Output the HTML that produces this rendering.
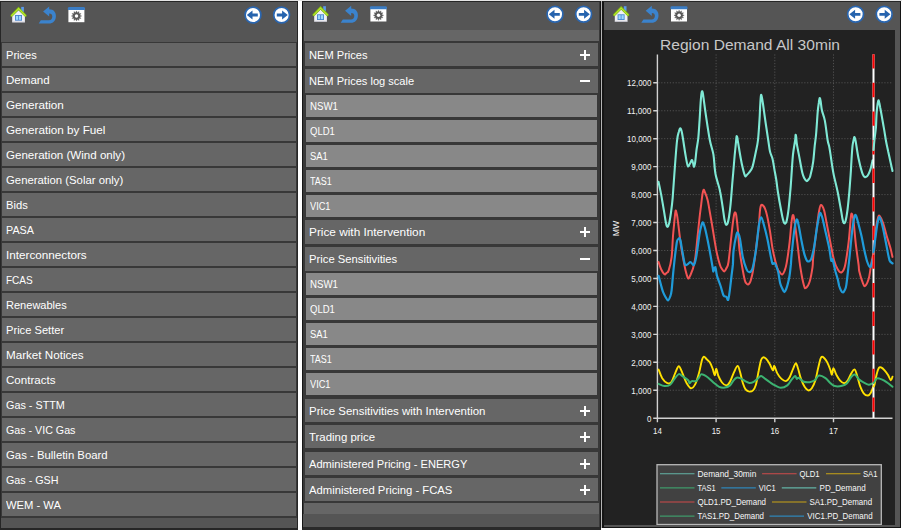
<!DOCTYPE html><html lang="en"><head><meta charset="utf-8"><title>NEM Viewer</title><style>

html,body{margin:0;padding:0}
body{width:902px;height:530px;position:relative;overflow:hidden;background:#fff;font-family:"Liberation Sans", sans-serif;font-size:11px;color:#fff}
.abs{position:absolute}
.panel{position:absolute;background:#555;box-sizing:border-box}
.tb{position:absolute}
.list{position:absolute;background:#383838}
.it{position:absolute;background:#666;height:23px;line-height:24px;white-space:nowrap;overflow:hidden;box-sizing:border-box;padding-left:4px}
.it span{display:inline-block;transform-origin:0 50%}
.sub{background:#888;font-size:10px;padding-left:3.5px}
.pm{position:absolute;right:8px;top:50%;width:10px;height:10px;margin-top:-5px}
.pm i{position:absolute;background:#fff;display:block}
.pm i.h{left:0;top:4px;width:10px;height:2px}
.pm i.v{left:4px;top:0;width:2px;height:10px}

</style></head><body>
<div class="abs" style="left:0;top:0;width:902px;height:1px;background:#e4e4e4"></div>
<div class="panel" style="left:0;top:1px;width:298px;height:529px;border:1px solid #262626;border-bottom-width:2px"></div>
<div class="list" style="left:1px;top:42px;width:296px;height:476px"></div>
<div class="it" style="left:2px;top:43px;width:294px"><span style="transform:scaleX(1.007)">Prices</span></div>
<div class="it" style="left:2px;top:68px;width:294px"><span style="transform:scaleX(1.050)">Demand</span></div>
<div class="it" style="left:2px;top:93px;width:294px"><span style="transform:scaleX(1.063)">Generation</span></div>
<div class="it" style="left:2px;top:118px;width:294px"><span style="transform:scaleX(1.063)">Generation by Fuel</span></div>
<div class="it" style="left:2px;top:143px;width:294px"><span style="transform:scaleX(1.052)">Generation (Wind only)</span></div>
<div class="it" style="left:2px;top:168px;width:294px"><span style="transform:scaleX(1.031)">Generation (Solar only)</span></div>
<div class="it" style="left:2px;top:193px;width:294px"><span style="transform:scaleX(1.015)">Bids</span></div>
<div class="it" style="left:2px;top:218px;width:294px"><span style="transform:scaleX(0.978)">PASA</span></div>
<div class="it" style="left:2px;top:243px;width:294px"><span style="transform:scaleX(1.064)">Interconnectors</span></div>
<div class="it" style="left:2px;top:268px;width:294px"><span style="transform:scaleX(0.911)">FCAS</span></div>
<div class="it" style="left:2px;top:293px;width:294px"><span style="transform:scaleX(1.003)">Renewables</span></div>
<div class="it" style="left:2px;top:318px;width:294px"><span style="transform:scaleX(1.012)">Price Setter</span></div>
<div class="it" style="left:2px;top:343px;width:294px"><span style="transform:scaleX(1.058)">Market Notices</span></div>
<div class="it" style="left:2px;top:368px;width:294px"><span style="transform:scaleX(1.051)">Contracts</span></div>
<div class="it" style="left:2px;top:393px;width:294px"><span style="transform:scaleX(0.983)">Gas - STTM</span></div>
<div class="it" style="left:2px;top:418px;width:294px"><span style="transform:scaleX(0.971)">Gas - VIC Gas</span></div>
<div class="it" style="left:2px;top:443px;width:294px"><span style="transform:scaleX(1.033)">Gas - Bulletin Board</span></div>
<div class="it" style="left:2px;top:468px;width:294px"><span style="transform:scaleX(0.977)">Gas - GSH</span></div>
<div class="it" style="left:2px;top:493px;width:294px"><span style="transform:scaleX(1.019)">WEM - WA</span></div>
<svg class="tb" style="left:0px;top:0px" width="297" height="28" viewBox="0.00 0.00 297 28"><g><rect x="21.2" y="6.9" width="2.7" height="5" fill="#5b9bea"/><path d="M12.2,16.2 L18.55,10.2 L24.9,16.2 L24.9,22.2 L12.2,22.2 Z" fill="#f0f0f6"/><path d="M12.2,21.5 H24.9 V22.4 H12.2 Z" fill="#cfcfd8"/><rect x="15" y="15" width="7" height="5.7" fill="#4a86d0"/><rect x="15.9" y="15.9" width="2.2" height="3.9" fill="#9dd8ff"/><rect x="18.9" y="15.9" width="2.2" height="3.9" fill="#9dd8ff"/><path d="M11.7,15.5 L18.55,8.5 L25.4,15.5" fill="none" stroke="#86bf10" stroke-width="2.5" stroke-linecap="round" stroke-linejoin="miter"/><path d="M11.8,15.5 L18.55,8.7 L25.3,15.5" fill="none" stroke="#b4e530" stroke-width="1.2" stroke-linecap="round" stroke-linejoin="miter"/></g><path d="M43.1,11.4 L49.2,6.4 L49.2,9.3 C53.6,9.3 55.9,12.2 55.9,15.9 C55.9,20.6 53,23.5 49,23.5 L38.7,23.5 L40.8,20.3 L49,20.3 C51,20.3 52.3,18.8 52.3,16.5 C52.3,14.6 51.3,13.6 49.2,13.6 L49.2,16.6 Z" fill="#3b83cd"/><g><rect x="68.4" y="8" width="16" height="14.2" fill="#ffffff"/><path d="M67.9,9.9 V8.2 Q67.9,6.9 69.2,6.9 H83.6 Q84.9,6.9 84.9,8.2 V9.9 Z" fill="#3a7cc4"/><polygon points="76.50,10.90 77.35,12.81 79.05,11.58 78.83,13.67 80.92,13.45 79.69,15.15 81.60,16.00 79.69,16.85 80.92,18.55 78.83,18.33 79.05,20.42 77.35,19.19 76.50,21.10 75.65,19.19 73.95,20.42 74.17,18.33 72.08,18.55 73.31,16.85 71.40,16.00 73.31,15.15 72.08,13.45 74.17,13.67 73.95,11.58 75.65,12.81" fill="#585858" stroke="#585858" stroke-width="0.4"/><circle cx="76.5" cy="16.0" r="1.75" fill="#fff"/></g><circle cx="253.0" cy="15" r="7.9" fill="#fff" stroke="#2a66b0" stroke-width="1.7"/><path d="M246.8,15 L252.5,10.5 L252.5,13.6 L257.8,13.6 L257.8,16.4 L252.5,16.4 L252.5,19.5 Z" fill="#2563ae"/><circle cx="281.6" cy="15" r="7.9" fill="#fff" stroke="#2a66b0" stroke-width="1.7"/><path d="M287.8,15 L282.1,10.5 L282.1,13.6 L276.8,13.6 L276.8,16.4 L282.1,16.4 L282.1,19.5 Z" fill="#2563ae"/></svg>
<div class="panel" style="left:302px;top:1px;width:299px;height:529px;border:1px solid #161616;border-top-color:#262626;border-bottom:3px solid #2a2a2a"></div><div class="abs" style="left:599px;top:2px;width:1px;height:525px;background:#3a3a3a"></div>
<div class="list" style="left:303px;top:30px;width:297px;height:484px"></div>
<div class="it" style="left:304px;top:30px;width:295px;height:11px"></div>
<div class="it" style="left:305px;top:43px;width:293px;height:23px;line-height:24px"><span style="transform:scaleX(1.009)">NEM Prices</span><b class="pm"><i class="h"></i><i class="v"></i></b></div>
<div class="it" style="left:305px;top:69px;width:293px;height:24px;line-height:25px"><span style="transform:scaleX(1.005)">NEM Prices log scale</span><b class="pm"><i class="h"></i></b></div>
<div class="it sub" style="left:306px;top:95px;width:291px;height:22px;line-height:23px"><span style="transform:scaleX(0.967)">NSW1</span></div>
<div class="it sub" style="left:306px;top:120px;width:291px;height:22px;line-height:23px"><span style="transform:scaleX(0.950)">QLD1</span></div>
<div class="it sub" style="left:306px;top:145px;width:291px;height:22px;line-height:23px"><span style="transform:scaleX(0.940)">SA1</span></div>
<div class="it sub" style="left:306px;top:170px;width:291px;height:22px;line-height:23px"><span style="transform:scaleX(0.900)">TAS1</span></div>
<div class="it sub" style="left:306px;top:195px;width:291px;height:22px;line-height:23px"><span style="transform:scaleX(0.920)">VIC1</span></div>
<div class="it" style="left:305px;top:220px;width:293px;height:24px;line-height:25px"><span style="transform:scaleX(1.074)">Price with Intervention</span><b class="pm"><i class="h"></i><i class="v"></i></b></div>
<div class="it" style="left:305px;top:247px;width:293px;height:24px;line-height:25px"><span style="transform:scaleX(1.023)">Price Sensitivities</span><b class="pm"><i class="h"></i></b></div>
<div class="it sub" style="left:306px;top:273px;width:291px;height:22px;line-height:23px"><span style="transform:scaleX(0.967)">NSW1</span></div>
<div class="it sub" style="left:306px;top:298px;width:291px;height:22px;line-height:23px"><span style="transform:scaleX(0.950)">QLD1</span></div>
<div class="it sub" style="left:306px;top:323px;width:291px;height:22px;line-height:23px"><span style="transform:scaleX(0.940)">SA1</span></div>
<div class="it sub" style="left:306px;top:348px;width:291px;height:22px;line-height:23px"><span style="transform:scaleX(0.900)">TAS1</span></div>
<div class="it sub" style="left:306px;top:373px;width:291px;height:22px;line-height:23px"><span style="transform:scaleX(0.920)">VIC1</span></div>
<div class="it" style="left:305px;top:399px;width:293px;height:23px;line-height:24px"><span style="transform:scaleX(1.042)">Price Sensitivities with Intervention</span><b class="pm"><i class="h"></i><i class="v"></i></b></div>
<div class="it" style="left:305px;top:425px;width:293px;height:23px;line-height:24px"><span style="transform:scaleX(1.037)">Trading price</span><b class="pm"><i class="h"></i><i class="v"></i></b></div>
<div class="it" style="left:305px;top:452px;width:293px;height:23px;line-height:24px"><span style="transform:scaleX(1.008)">Administered Pricing - ENERGY</span><b class="pm"><i class="h"></i><i class="v"></i></b></div>
<div class="it" style="left:305px;top:478px;width:293px;height:23px;line-height:24px"><span style="transform:scaleX(1.024)">Administered Pricing - FCAS</span><b class="pm"><i class="h"></i><i class="v"></i></b></div>
<div class="it" style="left:304px;top:503px;width:295px;height:11px"></div>
<svg class="tb" style="left:302px;top:0px" width="297" height="28" viewBox="0.00 0.70 297 28"><g><rect x="21.2" y="6.9" width="2.7" height="5" fill="#5b9bea"/><path d="M12.2,16.2 L18.55,10.2 L24.9,16.2 L24.9,22.2 L12.2,22.2 Z" fill="#f0f0f6"/><path d="M12.2,21.5 H24.9 V22.4 H12.2 Z" fill="#cfcfd8"/><rect x="15" y="15" width="7" height="5.7" fill="#4a86d0"/><rect x="15.9" y="15.9" width="2.2" height="3.9" fill="#9dd8ff"/><rect x="18.9" y="15.9" width="2.2" height="3.9" fill="#9dd8ff"/><path d="M11.7,15.5 L18.55,8.5 L25.4,15.5" fill="none" stroke="#86bf10" stroke-width="2.5" stroke-linecap="round" stroke-linejoin="miter"/><path d="M11.8,15.5 L18.55,8.7 L25.3,15.5" fill="none" stroke="#b4e530" stroke-width="1.2" stroke-linecap="round" stroke-linejoin="miter"/></g><path d="M43.1,11.4 L49.2,6.4 L49.2,9.3 C53.6,9.3 55.9,12.2 55.9,15.9 C55.9,20.6 53,23.5 49,23.5 L38.7,23.5 L40.8,20.3 L49,20.3 C51,20.3 52.3,18.8 52.3,16.5 C52.3,14.6 51.3,13.6 49.2,13.6 L49.2,16.6 Z" fill="#3b83cd"/><g><rect x="68.4" y="8" width="16" height="14.2" fill="#ffffff"/><path d="M67.9,9.9 V8.2 Q67.9,6.9 69.2,6.9 H83.6 Q84.9,6.9 84.9,8.2 V9.9 Z" fill="#3a7cc4"/><polygon points="76.50,10.90 77.35,12.81 79.05,11.58 78.83,13.67 80.92,13.45 79.69,15.15 81.60,16.00 79.69,16.85 80.92,18.55 78.83,18.33 79.05,20.42 77.35,19.19 76.50,21.10 75.65,19.19 73.95,20.42 74.17,18.33 72.08,18.55 73.31,16.85 71.40,16.00 73.31,15.15 72.08,13.45 74.17,13.67 73.95,11.58 75.65,12.81" fill="#585858" stroke="#585858" stroke-width="0.4"/><circle cx="76.5" cy="16.0" r="1.75" fill="#fff"/></g><circle cx="253.0" cy="15" r="7.9" fill="#fff" stroke="#2a66b0" stroke-width="1.7"/><path d="M246.8,15 L252.5,10.5 L252.5,13.6 L257.8,13.6 L257.8,16.4 L252.5,16.4 L252.5,19.5 Z" fill="#2563ae"/><circle cx="281.6" cy="15" r="7.9" fill="#fff" stroke="#2a66b0" stroke-width="1.7"/><path d="M287.8,15 L282.1,10.5 L282.1,13.6 L276.8,13.6 L276.8,16.4 L282.1,16.4 L282.1,19.5 Z" fill="#2563ae"/></svg>
<div class="abs" style="left:601px;top:1px;width:1px;height:529px;background:#b4b4b4"></div>
<div class="panel" style="left:602px;top:1px;width:299px;height:527px;border:1px solid #141414;border-left-width:2px;border-top-color:#262626"></div>
<svg class="tb" style="left:602px;top:0px" width="297" height="28" viewBox="-0.60 0.70 297 28"><g><rect x="21.2" y="6.9" width="2.7" height="5" fill="#5b9bea"/><path d="M12.2,16.2 L18.55,10.2 L24.9,16.2 L24.9,22.2 L12.2,22.2 Z" fill="#f0f0f6"/><path d="M12.2,21.5 H24.9 V22.4 H12.2 Z" fill="#cfcfd8"/><rect x="15" y="15" width="7" height="5.7" fill="#4a86d0"/><rect x="15.9" y="15.9" width="2.2" height="3.9" fill="#9dd8ff"/><rect x="18.9" y="15.9" width="2.2" height="3.9" fill="#9dd8ff"/><path d="M11.7,15.5 L18.55,8.5 L25.4,15.5" fill="none" stroke="#86bf10" stroke-width="2.5" stroke-linecap="round" stroke-linejoin="miter"/><path d="M11.8,15.5 L18.55,8.7 L25.3,15.5" fill="none" stroke="#b4e530" stroke-width="1.2" stroke-linecap="round" stroke-linejoin="miter"/></g><path d="M43.1,11.4 L49.2,6.4 L49.2,9.3 C53.6,9.3 55.9,12.2 55.9,15.9 C55.9,20.6 53,23.5 49,23.5 L38.7,23.5 L40.8,20.3 L49,20.3 C51,20.3 52.3,18.8 52.3,16.5 C52.3,14.6 51.3,13.6 49.2,13.6 L49.2,16.6 Z" fill="#3b83cd"/><g><rect x="68.4" y="8" width="16" height="14.2" fill="#ffffff"/><path d="M67.9,9.9 V8.2 Q67.9,6.9 69.2,6.9 H83.6 Q84.9,6.9 84.9,8.2 V9.9 Z" fill="#3a7cc4"/><polygon points="76.50,10.90 77.35,12.81 79.05,11.58 78.83,13.67 80.92,13.45 79.69,15.15 81.60,16.00 79.69,16.85 80.92,18.55 78.83,18.33 79.05,20.42 77.35,19.19 76.50,21.10 75.65,19.19 73.95,20.42 74.17,18.33 72.08,18.55 73.31,16.85 71.40,16.00 73.31,15.15 72.08,13.45 74.17,13.67 73.95,11.58 75.65,12.81" fill="#585858" stroke="#585858" stroke-width="0.4"/><circle cx="76.5" cy="16.0" r="1.75" fill="#fff"/></g><circle cx="253.0" cy="15" r="7.9" fill="#fff" stroke="#2a66b0" stroke-width="1.7"/><path d="M246.8,15 L252.5,10.5 L252.5,13.6 L257.8,13.6 L257.8,16.4 L252.5,16.4 L252.5,19.5 Z" fill="#2563ae"/><circle cx="281.6" cy="15" r="7.9" fill="#fff" stroke="#2a66b0" stroke-width="1.7"/><path d="M287.8,15 L282.1,10.5 L282.1,13.6 L276.8,13.6 L276.8,16.4 L282.1,16.4 L282.1,19.5 Z" fill="#2563ae"/></svg>
<svg class="abs" style="left:604px;top:30px" width="291" height="495" viewBox="604 30 291 495" font-family='Liberation Sans, sans-serif'><rect x="604" y="30" width="291" height="495" fill="#222"/><text x="660" y="50.1" font-size="15" fill="#c8c8c8" textLength="180" lengthAdjust="spacingAndGlyphs">Region Demand All 30min</text><path d="M658.4,390.25 H892.5 M658.4,362.30 H892.5 M658.4,334.35 H892.5 M658.4,306.40 H892.5 M658.4,278.45 H892.5 M658.4,250.50 H892.5 M658.4,222.55 H892.5 M658.4,194.60 H892.5 M658.4,166.65 H892.5 M658.4,138.70 H892.5 M658.4,110.75 H892.5 M658.4,82.80 H892.5 M716.10,54.4 V418.2 M774.80,54.4 V418.2 M833.50,54.4 V418.2" stroke="#565656" stroke-width="0.9" stroke-dasharray="1.2 1.66" fill="none"/><path d="M657.40,54.4 V418.90 M656.70,418.20 H892.5 M653.2,418.20 H657.4 M653.2,390.25 H657.4 M653.2,362.30 H657.4 M653.2,334.35 H657.4 M653.2,306.40 H657.4 M653.2,278.45 H657.4 M653.2,250.50 H657.4 M653.2,222.55 H657.4 M653.2,194.60 H657.4 M653.2,166.65 H657.4 M653.2,138.70 H657.4 M653.2,110.75 H657.4 M653.2,82.80 H657.4 M657.40,418.2 V422.2 M716.10,418.2 V422.2 M774.80,418.2 V422.2 M833.50,418.2 V422.2" stroke="#d2d2d2" stroke-width="1.4" fill="none"/><text x="651.4" y="421.5" font-size="9" fill="#f2f2f2" text-anchor="end" textLength="4.4" lengthAdjust="spacingAndGlyphs">0</text><text x="651.4" y="393.6" font-size="9" fill="#f2f2f2" text-anchor="end" textLength="20.1" lengthAdjust="spacingAndGlyphs">1,000</text><text x="651.4" y="365.6" font-size="9" fill="#f2f2f2" text-anchor="end" textLength="20.1" lengthAdjust="spacingAndGlyphs">2,000</text><text x="651.4" y="337.7" font-size="9" fill="#f2f2f2" text-anchor="end" textLength="20.1" lengthAdjust="spacingAndGlyphs">3,000</text><text x="651.4" y="309.7" font-size="9" fill="#f2f2f2" text-anchor="end" textLength="20.1" lengthAdjust="spacingAndGlyphs">4,000</text><text x="651.4" y="281.8" font-size="9" fill="#f2f2f2" text-anchor="end" textLength="20.1" lengthAdjust="spacingAndGlyphs">5,000</text><text x="651.4" y="253.8" font-size="9" fill="#f2f2f2" text-anchor="end" textLength="20.1" lengthAdjust="spacingAndGlyphs">6,000</text><text x="651.4" y="225.8" font-size="9" fill="#f2f2f2" text-anchor="end" textLength="20.1" lengthAdjust="spacingAndGlyphs">7,000</text><text x="651.4" y="197.9" font-size="9" fill="#f2f2f2" text-anchor="end" textLength="20.1" lengthAdjust="spacingAndGlyphs">8,000</text><text x="651.4" y="170.0" font-size="9" fill="#f2f2f2" text-anchor="end" textLength="20.1" lengthAdjust="spacingAndGlyphs">9,000</text><text x="651.4" y="142.0" font-size="9" fill="#f2f2f2" text-anchor="end" textLength="24.3" lengthAdjust="spacingAndGlyphs">10,000</text><text x="651.4" y="114.0" font-size="9" fill="#f2f2f2" text-anchor="end" textLength="24.3" lengthAdjust="spacingAndGlyphs">11,000</text><text x="651.4" y="86.1" font-size="9" fill="#f2f2f2" text-anchor="end" textLength="24.3" lengthAdjust="spacingAndGlyphs">12,000</text><text x="657.4" y="433.6" font-size="9" fill="#f2f2f2" text-anchor="middle" textLength="8.8" lengthAdjust="spacingAndGlyphs">14</text><text x="716.1" y="433.6" font-size="9" fill="#f2f2f2" text-anchor="middle" textLength="8.8" lengthAdjust="spacingAndGlyphs">15</text><text x="774.8" y="433.6" font-size="9" fill="#f2f2f2" text-anchor="middle" textLength="8.8" lengthAdjust="spacingAndGlyphs">16</text><text x="833.5" y="433.6" font-size="9" fill="#f2f2f2" text-anchor="middle" textLength="8.8" lengthAdjust="spacingAndGlyphs">17</text><text transform="translate(618.5,228.6) rotate(-90)" font-size="9" fill="#f2f2f2" text-anchor="middle" textLength="15.4" lengthAdjust="spacingAndGlyphs">MW</text><path d="M658.5,181.8 C659.0,184.1 660.3,190.3 661.3,195.4 C662.2,200.5 663.5,208.1 664.2,212.4 C664.9,216.8 665.3,219.3 665.7,221.5 C666.1,223.7 666.3,224.7 666.6,225.6 C666.9,226.5 667.1,226.7 667.4,226.8 C667.7,226.9 667.9,226.7 668.2,226.0 C668.5,225.3 668.8,224.9 669.3,222.6 C669.8,220.3 670.4,216.6 671.0,212.4 C671.6,208.2 672.2,203.9 672.7,197.7 C673.2,191.5 673.6,184.4 674.3,175.0 C675.0,165.6 676.2,148.2 677.0,141.0 C677.8,133.8 678.2,134.1 678.8,132.0 C679.3,129.9 679.8,128.4 680.3,128.4 C680.8,128.4 681.3,129.7 681.8,132.0 C682.3,134.3 682.9,138.2 683.5,142.0 C684.1,145.8 684.8,151.0 685.5,155.0 C686.2,159.0 687.1,164.5 687.8,166.0 C688.5,167.5 689.1,165.0 689.8,164.0 C690.5,163.0 691.3,160.2 691.8,160.0 C692.3,159.8 692.6,161.9 693.0,163.0 C693.4,164.1 693.6,166.9 694.0,166.7 C694.4,166.5 694.8,164.8 695.2,162.0 C695.6,159.2 696.0,154.0 696.5,150.0 C697.0,146.0 697.8,143.0 698.3,138.0 C698.8,133.0 699.2,125.8 699.6,120.0 C700.0,114.2 700.3,107.3 700.6,103.0 C700.9,98.7 701.2,96.0 701.4,94.0 C701.6,92.0 701.8,91.5 702.0,91.3 C702.2,91.1 702.5,91.5 702.8,93.0 C703.1,94.5 703.3,96.2 703.8,100.0 C704.3,103.8 705.0,109.3 706.0,116.0 C707.0,122.7 708.6,133.6 709.8,140.0 C711.0,146.4 712.6,149.6 713.4,154.4 C714.2,159.2 714.4,165.4 714.8,168.8 C715.2,172.2 715.2,172.6 715.7,175.0 C716.2,177.4 717.2,180.7 718.0,183.5 C718.8,186.3 719.5,188.2 720.2,192.0 C721.0,195.8 721.8,201.6 722.5,206.0 C723.2,210.4 723.8,215.5 724.3,218.5 C724.8,221.5 725.2,222.8 725.6,223.8 C726.0,224.9 726.2,224.9 726.5,224.8 C726.8,224.8 727.2,224.8 727.6,223.5 C728.0,222.2 728.5,220.2 729.0,217.0 C729.5,213.8 730.1,209.0 730.6,204.0 C731.1,199.0 731.6,192.2 732.0,187.0 C732.4,181.8 732.7,178.5 733.2,173.0 C733.7,167.5 734.3,159.2 734.8,154.0 C735.3,148.8 735.7,144.9 736.0,142.0 C736.3,139.1 736.4,137.0 736.6,136.3 C736.8,135.6 737.2,137.2 737.4,138.0 C737.6,138.8 737.3,138.0 737.9,141.4 C738.5,144.8 739.9,154.1 740.8,158.7 C741.6,163.3 742.3,166.1 743.0,169.0 C743.7,171.9 744.5,175.0 745.1,176.0 C745.7,177.0 746.2,175.5 746.8,175.0 C747.4,174.5 747.8,174.3 748.7,173.0 C749.6,171.7 751.1,171.0 752.3,167.4 C753.5,163.8 754.9,156.1 755.9,151.5 C756.9,146.9 757.4,145.2 758.0,140.0 C758.6,134.8 759.1,126.0 759.5,120.0 C759.9,114.0 760.0,108.1 760.3,104.0 C760.5,99.9 760.8,96.4 761.0,95.2 C761.2,94.0 761.5,95.5 761.8,97.0 C762.1,98.5 762.4,99.8 763.0,104.0 C763.6,108.2 764.6,116.0 765.5,122.0 C766.4,128.0 767.5,135.1 768.2,140.0 C769.0,144.9 769.3,148.4 770.0,151.5 C770.7,154.6 771.8,155.8 772.5,158.7 C773.2,161.6 773.7,165.2 774.3,168.8 C774.9,172.4 775.7,176.1 776.3,180.0 C776.9,183.9 777.1,186.8 777.9,192.0 C778.7,197.2 780.4,206.6 781.3,211.2 C782.1,215.8 782.5,217.5 783.0,219.5 C783.5,221.5 783.8,222.3 784.2,223.0 C784.6,223.7 784.9,223.7 785.3,223.5 C785.7,223.3 786.0,223.1 786.4,221.8 C786.8,220.6 787.2,218.3 787.6,216.0 C788.0,213.7 788.2,212.3 788.7,208.0 C789.2,203.7 789.9,195.5 790.4,190.0 C790.9,184.5 791.1,180.9 791.5,175.0 C791.9,169.1 792.4,160.2 793.0,154.4 C793.6,148.6 794.8,143.3 795.2,140.0 C795.6,136.7 795.4,135.3 795.6,134.8 C795.8,134.3 796.0,135.7 796.2,137.0 C796.4,138.3 796.3,140.0 796.7,142.9 C797.1,145.8 797.8,149.4 798.8,154.4 C799.8,159.4 801.4,169.1 802.4,173.1 C803.4,177.1 803.8,177.2 804.5,178.5 C805.2,179.8 806.0,180.9 806.7,181.1 C807.4,181.3 807.9,180.3 808.5,179.5 C809.1,178.7 809.5,179.0 810.3,176.0 C811.1,173.0 812.5,166.6 813.2,161.6 C813.9,156.6 814.2,150.6 814.7,146.0 C815.2,141.4 815.6,139.5 816.1,134.0 C816.6,128.5 817.2,118.4 817.6,113.2 C818.0,108.0 818.4,105.5 818.8,103.0 C819.1,100.5 819.4,98.4 819.7,98.1 C820.0,97.8 820.2,99.0 820.6,101.0 C821.0,103.0 821.2,107.1 821.9,110.3 C822.6,113.5 823.8,115.5 824.8,120.4 C825.8,125.4 826.9,135.7 827.6,140.0 C828.3,144.3 828.6,143.6 829.1,146.0 C829.6,148.4 829.8,149.9 830.5,154.4 C831.2,158.9 832.2,166.8 833.4,173.1 C834.6,179.4 836.5,186.0 837.7,192.0 C838.9,198.0 840.0,204.6 840.8,209.0 C841.6,213.4 842.0,216.3 842.4,218.5 C842.8,220.7 843.1,221.5 843.4,222.3 C843.7,223.1 844.0,223.2 844.3,223.2 C844.6,223.1 844.9,223.1 845.3,222.0 C845.7,220.9 846.1,218.7 846.5,216.5 C846.9,214.3 847.1,213.1 847.6,209.0 C848.1,204.9 848.8,197.7 849.3,192.0 C849.8,186.3 850.2,180.1 850.6,175.0 C851.0,169.9 851.1,166.4 851.4,161.6 C851.7,156.8 852.1,149.6 852.5,146.0 C852.9,142.4 853.3,141.5 853.6,140.0 C853.9,138.5 854.1,137.2 854.3,137.0 C854.5,136.8 854.8,137.8 855.0,138.5 C855.2,139.2 855.1,138.0 855.7,141.4 C856.3,144.8 857.4,153.2 858.6,158.7 C859.8,164.2 861.6,171.6 862.9,174.6 C864.2,177.6 865.3,177.4 866.5,176.7 C867.7,176.0 869.1,173.1 870.1,170.3 C871.1,167.6 872.2,161.9 872.6,160.2" fill="none" stroke="#7fe9d5" stroke-width="2.1" stroke-linejoin="round" stroke-linecap="round"/><path d="M658.6,262.0 C659.0,263.2 660.0,266.9 661.0,269.0 C662.0,271.1 663.5,273.6 664.4,274.3 C665.3,275.0 665.8,273.6 666.5,273.0 C667.2,272.4 667.9,273.0 668.7,270.4 C669.6,267.8 670.9,262.9 671.6,257.2 C672.3,251.5 672.5,242.2 673.0,236.0 C673.5,229.8 674.1,224.2 674.5,220.0 C674.9,215.8 675.3,212.0 675.6,210.8 C675.9,209.6 676.2,211.9 676.5,213.0 C676.8,214.1 677.0,214.5 677.4,217.3 C677.8,220.1 678.4,225.2 679.0,230.0 C679.6,234.8 680.1,240.0 681.0,246.0 C681.9,252.0 683.7,261.3 684.6,266.0 C685.5,270.7 685.9,271.9 686.5,274.0 C687.1,276.1 687.6,278.2 688.2,278.5 C688.8,278.8 689.4,277.1 690.0,276.0 C690.6,274.9 691.3,273.0 691.8,271.6 C692.3,270.2 692.6,270.1 693.2,267.7 C693.8,265.3 694.7,262.5 695.4,257.2 C696.1,251.9 696.9,242.5 697.6,236.0 C698.3,229.5 698.9,223.3 699.5,218.0 C700.1,212.7 700.7,208.3 701.2,204.3 C701.7,200.3 702.1,196.4 702.5,194.0 C702.9,191.6 703.2,190.0 703.6,189.7 C704.0,189.4 704.1,190.3 704.8,192.0 C705.5,193.7 706.8,196.7 707.6,200.0 C708.4,203.3 709.1,207.9 709.8,212.0 C710.5,216.1 710.9,218.1 712.0,224.5 C713.1,230.9 715.0,243.7 716.3,250.4 C717.6,257.1 718.9,261.7 719.9,264.8 C720.9,267.9 721.3,267.9 722.0,269.0 C722.7,270.1 723.5,271.7 724.2,271.5 C725.0,271.3 725.8,269.6 726.5,268.0 C727.2,266.4 727.7,267.3 728.5,262.0 C729.3,256.7 730.6,242.7 731.4,236.0 C732.1,229.3 732.5,225.7 733.0,222.0 C733.5,218.3 733.9,215.3 734.3,213.7 C734.7,212.1 735.0,212.3 735.3,212.5 C735.6,212.7 735.8,212.1 736.2,215.0 C736.6,217.9 737.4,224.2 737.9,230.0 C738.4,235.8 738.8,243.6 739.5,249.8 C740.2,256.0 741.3,261.9 742.2,267.0 C743.1,272.1 744.1,277.4 744.8,280.2 C745.5,282.9 746.0,282.8 746.5,283.5 C747.0,284.2 747.6,284.5 748.1,284.4 C748.6,284.3 749.2,283.5 749.7,282.8 C750.2,282.1 750.3,281.9 750.8,280.2 C751.3,278.4 752.1,275.8 752.7,272.3 C753.4,268.8 754.0,263.9 754.7,259.0 C755.4,254.2 756.0,248.4 756.7,243.2 C757.4,238.0 758.1,233.8 758.7,228.0 C759.3,222.2 759.6,212.4 760.2,208.6 C760.8,204.8 761.4,204.5 762.4,205.0 C763.4,205.5 764.8,207.5 766.0,211.5 C767.2,215.5 768.5,222.3 769.6,228.8 C770.8,235.3 771.6,243.9 772.9,250.4 C774.2,256.9 776.0,264.0 777.2,267.7 C778.4,271.4 779.2,271.4 780.0,272.5 C780.8,273.6 781.5,274.8 782.2,274.5 C783.0,274.2 783.8,272.9 784.5,271.0 C785.2,269.1 785.8,268.0 786.6,263.4 C787.4,258.8 788.7,250.2 789.5,243.2 C790.3,236.2 791.0,226.3 791.6,221.6 C792.2,216.9 792.7,214.4 793.3,215.1 C793.9,215.8 794.5,221.3 795.2,226.0 C795.9,230.7 796.5,236.4 797.4,243.2 C798.2,250.0 799.2,260.0 800.3,267.0 C801.4,274.0 802.9,281.8 803.9,285.3 C804.9,288.8 805.0,288.4 806.0,287.8 C807.0,287.2 808.5,285.1 809.6,281.7 C810.7,278.3 811.9,271.3 812.5,267.3 C813.1,263.3 812.6,263.3 813.2,257.6 C813.8,251.9 815.1,240.8 816.1,233.1 C817.1,225.4 818.2,216.2 819.0,211.5 C819.8,206.8 820.1,205.2 820.9,205.0 C821.7,204.8 823.0,206.8 824.0,210.1 C825.0,213.3 825.8,219.0 826.9,224.5 C828.0,230.0 829.3,237.2 830.5,243.2 C831.7,249.2 832.9,256.2 834.1,260.5 C835.3,264.8 836.5,267.2 837.7,269.2 C838.9,271.2 840.1,273.0 841.3,272.5 C842.5,272.0 843.7,271.2 844.9,266.3 C846.1,261.4 847.5,251.1 848.5,243.2 C849.5,235.3 850.2,223.6 850.7,218.7 C851.2,213.8 851.3,213.2 851.8,213.7 C852.3,214.2 853.0,216.7 853.6,221.6 C854.2,226.5 854.9,236.0 855.7,243.2 C856.5,250.4 858.0,260.1 858.6,264.8 C859.2,269.5 858.6,268.6 859.3,271.6 C860.0,274.7 861.9,280.7 862.9,283.1 C863.9,285.5 864.1,286.7 865.1,286.0 C866.1,285.3 867.7,282.1 868.7,278.8 C869.7,275.5 870.2,269.9 870.9,266.0 C871.6,262.1 872.6,257.1 873.0,255.3" fill="none" stroke="#f25353" stroke-width="2.0" stroke-linejoin="round" stroke-linecap="round"/><path d="M658.6,369.5 C659.2,370.9 660.8,375.9 662.2,378.2 C663.7,380.5 665.7,382.6 667.3,383.2 C668.9,383.8 670.3,383.5 671.6,381.8 C672.9,380.1 674.0,375.7 675.2,373.1 C676.4,370.5 677.6,366.2 678.8,366.2 C680.0,366.2 681.1,370.3 682.4,373.1 C683.7,375.9 685.2,380.7 686.7,383.2 C688.2,385.7 689.7,388.2 691.1,388.3 C692.5,388.4 694.1,386.4 695.4,383.9 C696.7,381.4 697.9,377.1 699.0,373.1 C700.1,369.2 701.1,362.9 701.9,360.2 C702.7,357.4 703.2,356.7 704.0,356.6 C704.8,356.5 705.9,358.6 706.9,359.5 C707.9,360.4 708.8,360.8 709.8,362.3 C710.8,363.9 711.9,366.6 712.7,368.8 C713.5,371.0 714.2,375.3 714.8,375.3 C715.4,375.3 715.7,368.7 716.3,368.8 C716.9,368.9 717.4,373.7 718.4,376.0 C719.4,378.3 720.7,380.9 722.0,382.5 C723.3,384.1 725.1,385.5 726.4,385.4 C727.7,385.3 728.8,383.9 730.0,381.8 C731.2,379.8 732.4,375.8 733.6,373.1 C734.9,370.5 736.4,366.1 737.5,365.9 C738.6,365.7 739.1,368.8 740.0,371.7 C740.9,374.6 741.9,380.2 742.9,383.2 C743.9,386.2 744.7,388.3 745.8,389.7 C746.9,391.1 748.2,391.5 749.4,391.6 C750.6,391.7 751.9,391.5 753.0,390.4 C754.1,389.2 754.9,388.0 755.9,384.7 C756.9,381.4 757.9,374.4 758.8,370.3 C759.6,366.2 760.3,362.4 761.0,360.2 C761.7,358.0 762.3,357.6 763.1,357.3 C763.9,357.1 764.9,357.6 766.0,358.7 C767.1,359.8 768.5,361.9 769.6,363.8 C770.8,365.7 772.1,370.0 772.9,370.3 C773.7,370.6 773.6,365.4 774.3,365.9 C775.0,366.4 776.0,370.9 777.2,373.1 C778.4,375.3 780.0,377.6 781.5,378.9 C783.0,380.2 784.6,381.3 785.9,381.1 C787.2,380.9 788.3,379.6 789.5,377.5 C790.7,375.4 792.0,371.2 793.1,368.8 C794.2,366.4 795.1,363.1 795.9,363.1 C796.7,363.1 797.2,366.2 798.1,368.8 C799.0,371.4 799.9,375.9 801.0,378.9 C802.1,381.9 803.4,384.9 804.6,386.8 C805.8,388.7 807.0,390.1 808.2,390.4 C809.4,390.6 810.6,390.0 811.8,388.3 C813.0,386.6 814.3,383.8 815.4,380.3 C816.5,376.8 817.3,371.2 818.3,367.4 C819.3,363.6 820.1,358.8 821.2,357.3 C822.3,355.9 823.7,357.7 824.8,358.7 C825.9,359.7 826.6,361.2 827.6,363.1 C828.6,365.0 829.8,368.4 830.5,370.3 C831.2,372.2 831.5,375.0 832.0,374.6 C832.5,374.2 832.7,368.1 833.4,368.1 C834.1,368.1 835.2,372.6 836.3,374.6 C837.4,376.6 838.6,378.9 839.9,380.3 C841.2,381.7 842.9,383.2 844.2,383.2 C845.5,383.2 846.6,382.0 847.8,380.3 C849.0,378.6 850.2,374.9 851.4,373.1 C852.5,371.3 853.7,369.0 854.7,369.5 C855.7,370.0 856.3,373.2 857.2,376.0 C858.1,378.8 859.0,383.2 860.1,386.1 C861.2,389.0 862.4,391.7 863.7,393.3 C865.0,394.9 866.8,395.6 868.0,395.5 C869.2,395.4 870.1,393.9 870.9,392.6 C871.7,391.3 872.6,388.4 873.0,387.6" fill="none" stroke="#ffe100" stroke-width="1.9" stroke-linejoin="round" stroke-linecap="round"/><path d="M658.6,383.9 C659.6,384.3 662.5,386.0 664.4,386.1 C666.3,386.2 668.5,385.9 670.2,384.7 C671.9,383.5 673.1,380.7 674.5,378.9 C675.9,377.1 677.4,374.5 678.8,374.1 C680.2,373.7 681.5,375.7 683.1,376.7 C684.7,377.7 687.1,379.2 688.2,380.3 C689.3,381.4 689.0,383.1 689.6,383.2 C690.2,383.3 690.7,381.5 691.8,381.1 C692.9,380.8 694.9,381.7 696.1,381.1 C697.3,380.5 698.1,378.6 699.0,377.5 C699.9,376.4 700.0,374.4 701.4,374.3 C702.8,374.2 705.6,375.8 707.6,377.2 C709.6,378.6 711.5,380.9 713.4,382.5 C715.3,384.1 717.3,385.9 719.2,386.8 C721.1,387.7 723.1,387.8 724.9,387.6 C726.7,387.4 728.5,386.6 730.0,385.4 C731.5,384.2 732.5,381.6 733.6,380.3 C734.7,379.0 735.4,378.2 736.5,377.8 C737.6,377.4 738.6,377.6 740.0,378.2 C741.4,378.8 743.5,380.3 745.1,381.1 C746.7,381.9 748.0,382.8 749.4,382.9 C750.8,383.0 752.2,382.6 753.7,381.8 C755.2,381.0 756.9,379.2 758.1,378.2 C759.4,377.2 760.0,375.9 761.2,376.0 C762.4,376.1 763.8,377.8 765.3,378.9 C766.8,380.0 768.7,381.4 770.3,382.5 C771.9,383.6 773.2,384.5 775.0,385.4 C776.8,386.3 778.8,387.8 780.8,387.8 C782.8,387.8 785.5,386.8 787.3,385.4 C789.1,384.0 790.3,381.2 791.6,379.6 C792.9,378.0 794.4,376.1 795.2,376.0 C796.1,375.9 796.1,378.6 796.7,378.9 C797.3,379.2 797.6,377.3 798.8,377.8 C800.0,378.3 802.1,381.1 803.9,381.8 C805.7,382.5 807.8,382.4 809.6,382.2 C811.4,381.9 813.1,381.4 814.7,380.3 C816.3,379.2 817.2,376.0 819.0,375.6 C820.8,375.2 823.6,376.9 825.5,378.2 C827.4,379.5 829.0,381.9 830.5,383.2 C832.0,384.5 832.9,385.7 834.8,386.1 C836.7,386.5 840.0,386.3 842.0,385.8 C844.0,385.3 845.5,384.7 847.1,383.2 C848.7,381.7 850.1,378.1 851.4,376.7 C852.7,375.3 853.8,374.2 855.0,374.6 C856.2,375.0 857.1,377.6 858.6,378.9 C860.1,380.2 862.0,381.5 863.7,382.5 C865.4,383.5 867.2,384.6 868.7,384.7 C870.2,384.8 872.0,383.4 872.6,383.2" fill="none" stroke="#3cb371" stroke-width="2.0" stroke-linejoin="round" stroke-linecap="round"/><path d="M658.6,275.9 C659.0,277.4 660.3,282.4 661.0,285.0 C661.7,287.6 662.2,289.8 663.0,291.8 C663.8,293.8 664.7,295.6 665.5,297.0 C666.3,298.4 667.2,300.4 668.0,300.4 C668.8,300.4 669.4,298.7 670.0,297.0 C670.6,295.3 671.0,295.3 671.6,290.3 C672.2,285.3 672.9,274.9 673.8,267.0 C674.6,259.1 676.0,247.6 676.7,243.0 C677.4,238.4 677.5,240.3 678.0,239.5 C678.5,238.7 679.1,237.9 679.5,238.2 C679.9,238.4 680.2,239.4 680.6,241.0 C681.0,242.6 681.0,243.9 681.7,247.6 C682.4,251.3 683.8,260.5 684.6,263.4 C685.4,266.3 686.1,264.8 686.7,264.8 C687.4,264.8 687.9,264.0 688.5,263.5 C689.1,263.0 689.7,262.0 690.3,262.0 C690.9,262.0 691.4,263.0 692.0,263.5 C692.6,264.0 693.3,265.8 694.0,264.8 C694.7,263.8 695.1,262.9 696.1,257.6 C697.1,252.3 698.8,238.4 699.7,233.1 C700.6,227.8 700.8,227.8 701.3,226.0 C701.8,224.2 702.1,222.5 702.6,222.3 C703.1,222.1 703.5,223.7 704.0,225.0 C704.5,226.3 704.6,226.5 705.5,230.3 C706.4,234.1 707.9,241.4 709.1,247.6 C710.3,253.8 712.0,263.7 712.7,267.7 C713.4,271.7 713.0,271.6 713.4,271.6 C713.8,271.6 714.4,268.3 714.8,267.7 C715.2,267.1 715.2,266.6 715.6,268.0 C716.0,269.4 716.2,272.9 717.0,275.9 C717.8,278.9 719.5,282.8 720.6,286.0 C721.7,289.2 722.5,293.6 723.5,295.4 C724.5,297.2 725.6,296.1 726.4,296.8 C727.2,297.5 727.6,301.0 728.2,299.7 C728.8,298.4 729.5,292.8 730.0,288.9 C730.5,284.9 731.0,280.1 731.5,276.0 C732.0,271.9 732.5,268.7 732.9,264.4 C733.2,260.1 733.0,255.4 733.6,250.4 C734.2,245.4 735.8,237.5 736.5,234.6 C737.2,231.7 737.3,232.2 737.9,232.9 C738.5,233.6 739.2,234.8 740.0,238.9 C740.8,243.0 741.8,252.6 742.9,257.6 C744.0,262.7 745.5,266.8 746.5,269.2 C747.5,271.6 747.7,272.0 748.7,272.0 C749.7,272.0 751.1,272.8 752.3,269.2 C753.5,265.6 754.8,257.6 755.9,250.4 C757.0,243.2 757.9,231.4 758.8,225.9 C759.7,220.4 760.4,217.5 761.2,217.3 C762.0,217.1 762.8,220.9 763.8,224.5 C764.8,228.1 766.2,233.4 767.4,238.9 C768.6,244.4 770.1,253.5 771.0,257.6 C771.9,261.7 772.0,262.8 772.5,263.7 C773.0,264.6 773.5,262.9 774.0,263.0 C774.5,263.1 774.7,262.9 775.4,264.4 C776.1,265.9 777.4,268.9 778.2,272.0 C779.0,275.1 779.4,280.3 780.1,283.1 C780.8,285.9 781.8,287.5 782.5,289.0 C783.2,290.5 783.8,292.1 784.4,292.1 C785.0,292.1 785.6,290.5 786.2,289.0 C786.8,287.5 787.5,285.3 788.0,283.1 C788.5,280.9 789.0,279.1 789.5,276.0 C790.0,272.9 790.5,267.9 790.9,264.4 C791.2,260.9 791.0,260.7 791.6,254.8 C792.2,248.9 793.6,234.7 794.5,228.8 C795.4,222.9 796.0,220.0 796.7,219.5 C797.4,219.0 798.0,222.3 798.8,226.0 C799.6,229.7 800.7,237.0 801.7,241.8 C802.7,246.6 803.6,251.6 804.6,254.8 C805.6,258.0 806.4,260.5 807.5,261.2 C808.6,261.9 810.0,261.4 811.1,259.1 C812.2,256.8 813.0,252.7 814.0,247.6 C815.0,242.5 816.0,233.6 816.8,228.8 C817.5,224.0 818.0,221.6 818.5,219.0 C819.0,216.4 819.5,213.7 820.0,213.0 C820.5,212.3 820.9,214.1 821.3,215.0 C821.7,215.9 821.9,215.9 822.6,218.7 C823.3,221.5 824.4,226.9 825.5,231.7 C826.6,236.5 828.1,242.8 829.1,247.6 C830.1,252.4 830.6,258.5 831.2,260.5 C831.8,262.5 831.9,257.6 832.6,259.5 C833.3,261.4 834.8,268.8 835.6,272.0 C836.5,275.2 837.1,276.7 837.7,279.0 C838.3,281.3 838.7,284.1 839.2,286.0 C839.8,287.9 840.4,289.4 841.0,290.5 C841.6,291.6 842.5,292.6 843.1,292.5 C843.7,292.4 844.2,291.3 844.8,290.0 C845.3,288.7 845.7,289.3 846.4,284.6 C847.1,279.9 848.0,270.8 849.0,262.0 C850.0,253.2 851.2,239.1 852.1,231.7 C853.0,224.2 853.6,220.0 854.3,217.3 C854.9,214.6 855.3,214.4 856.0,215.6 C856.7,216.8 857.7,221.1 858.6,224.5 C859.5,227.9 860.5,231.7 861.5,236.0 C862.5,240.3 863.4,246.1 864.4,250.4 C865.4,254.7 866.3,259.2 867.3,262.0 C868.3,264.8 869.5,267.4 870.4,267.0 C871.3,266.6 872.2,260.8 872.6,259.5" fill="none" stroke="#1f9bd9" stroke-width="2.2" stroke-linejoin="round" stroke-linecap="round"/><path d="M873.5,54.2 V418" stroke="#fff" stroke-width="2" fill="none"/><path d="M873.5,54.2 V418" stroke="#f00" stroke-width="2" stroke-dasharray="14.4 14.2" fill="none"/><path d="M873.5,150.0 C873.7,148.2 874.1,142.9 874.5,139.2 C874.9,135.5 875.5,132.3 875.9,128.0 C876.2,123.7 876.3,117.2 876.6,113.2 C876.9,109.2 877.3,106.2 877.6,104.0 C877.9,101.8 878.1,100.5 878.4,100.3 C878.7,100.1 879.0,101.8 879.3,103.0 C879.6,104.2 879.5,103.4 880.2,107.5 C881.0,111.6 882.8,122.0 883.8,127.6 C884.8,133.2 885.3,137.0 886.0,141.0 C886.7,145.0 887.5,148.0 888.2,151.5 C889.0,155.0 889.8,158.8 890.5,162.0 C891.2,165.2 892.2,169.5 892.5,171.0" fill="none" stroke="#7fe9d5" stroke-width="2.1" stroke-linejoin="round" stroke-linecap="round"/><path d="M873.5,254.0 C873.6,253.4 873.6,254.6 874.0,250.4 C874.4,246.2 875.2,234.3 875.9,228.8 C876.6,223.3 877.5,219.4 878.1,217.3 C878.8,215.2 879.0,215.2 879.8,216.1 C880.6,217.0 882.0,219.7 883.1,223.0 C884.2,226.3 885.5,231.9 886.7,236.0 C887.9,240.1 889.3,244.1 890.3,247.6 C891.3,251.1 892.1,255.3 892.5,256.9" fill="none" stroke="#f25353" stroke-width="2.0" stroke-linejoin="round" stroke-linecap="round"/><path d="M873.5,386.5 C873.7,386.2 874.0,386.7 874.5,384.7 C875.0,382.7 875.9,377.4 876.6,374.6 C877.3,371.8 878.1,369.3 878.8,368.1 C879.5,366.9 880.0,367.0 881.0,367.4 C882.0,367.8 883.4,369.0 884.6,370.3 C885.8,371.6 887.2,373.6 888.2,375.3 C889.2,377.0 890.1,380.1 890.8,380.3 C891.5,380.5 892.2,377.3 892.5,376.7" fill="none" stroke="#ffe100" stroke-width="1.9" stroke-linejoin="round" stroke-linecap="round"/><path d="M873.5,382.8 C873.6,382.8 873.5,383.2 874.0,382.5 C874.5,381.8 875.7,379.2 876.6,378.6 C877.5,378.0 878.3,378.3 879.5,378.6 C880.7,378.9 882.3,379.5 883.8,380.3 C885.2,381.1 886.8,382.1 888.2,383.2 C889.7,384.3 891.8,386.2 892.5,386.8" fill="none" stroke="#3cb371" stroke-width="2.0" stroke-linejoin="round" stroke-linecap="round"/><path d="M873.5,252.0 C873.6,251.5 873.5,252.9 874.0,249.0 C874.5,245.1 875.9,233.6 876.6,228.8 C877.3,224.0 877.7,221.9 878.2,220.0 C878.7,218.1 878.9,216.8 879.5,217.3 C880.1,217.8 880.9,219.9 881.7,223.0 C882.6,226.1 883.7,231.4 884.6,236.0 C885.5,240.6 886.6,246.3 887.4,250.4 C888.2,254.5 888.8,258.3 889.6,260.5 C890.5,262.7 892.0,262.9 892.5,263.4" fill="none" stroke="#1f9bd9" stroke-width="2.2" stroke-linejoin="round" stroke-linecap="round"/><rect x="657" y="464.7" width="224.3" height="59.8" fill="#414141" stroke="#b8b8b8" stroke-width="1.3"/><path d="M660.0,473.7 H694.5" stroke="#63b3a6" stroke-width="1.1"/><text x="697.5" y="476.5" font-size="9.3" fill="#f8f8f8" textLength="58.8" lengthAdjust="spacingAndGlyphs">Demand_30min</text><path d="M762.1,473.7 H796.6" stroke="#cf4b4b" stroke-width="1.1"/><text x="799.4" y="476.5" font-size="9.3" fill="#f8f8f8" textLength="20.2" lengthAdjust="spacingAndGlyphs">QLD1</text><path d="M826.0,473.7 H860.5" stroke="#c9a416" stroke-width="1.1"/><text x="863.0" y="476.5" font-size="9.3" fill="#f8f8f8" textLength="14.5" lengthAdjust="spacingAndGlyphs">SA1</text><path d="M660.0,487.9 H694.5" stroke="#3f9a6a" stroke-width="1.1"/><text x="697.5" y="490.7" font-size="9.3" fill="#f8f8f8" textLength="18.1" lengthAdjust="spacingAndGlyphs">TAS1</text><path d="M721.3,487.9 H755.8" stroke="#2f86b8" stroke-width="1.1"/><text x="758.8" y="490.7" font-size="9.3" fill="#f8f8f8" textLength="16.8" lengthAdjust="spacingAndGlyphs">VIC1</text><path d="M781.8,487.9 H816.3" stroke="#63b3a6" stroke-width="1.1"/><text x="819.6" y="490.7" font-size="9.3" fill="#f8f8f8" textLength="46.1" lengthAdjust="spacingAndGlyphs">PD_Demand</text><path d="M660.0,502.0 H694.5" stroke="#cf4b4b" stroke-width="1.1"/><text x="697.5" y="504.8" font-size="9.3" fill="#f8f8f8" textLength="68.5" lengthAdjust="spacingAndGlyphs">QLD1.PD_Demand</text><path d="M772.0,502.0 H806.5" stroke="#c9a416" stroke-width="1.1"/><text x="809.5" y="504.8" font-size="9.3" fill="#f8f8f8" textLength="62.6" lengthAdjust="spacingAndGlyphs">SA1.PD_Demand</text><path d="M660.0,516.1 H694.5" stroke="#3f9a6a" stroke-width="1.1"/><text x="697.5" y="518.9" font-size="9.3" fill="#f8f8f8" textLength="66.5" lengthAdjust="spacingAndGlyphs">TAS1.PD_Demand</text><path d="M769.5,516.1 H804.0" stroke="#2f86b8" stroke-width="1.1"/><text x="807.3" y="518.9" font-size="9.3" fill="#f8f8f8" textLength="65.3" lengthAdjust="spacingAndGlyphs">VIC1.PD_Demand</text></svg>
<div class="abs" style="left:901px;top:1px;width:1px;height:529px;background:#fff"></div>
<div class="abs" style="left:601px;top:528px;width:301px;height:2px;background:#fff"></div>
</body></html>
